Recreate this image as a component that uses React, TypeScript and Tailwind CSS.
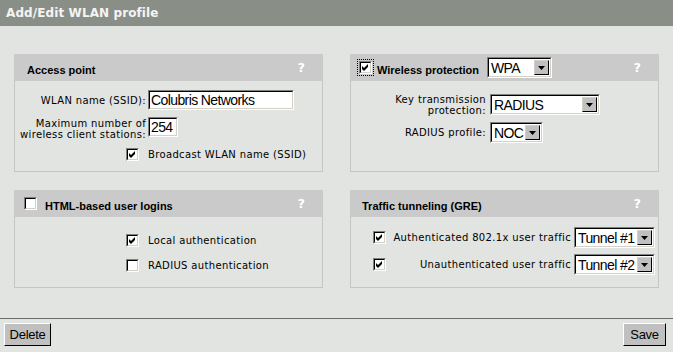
import React from "react";

function Check() {
  return (
    <svg width="7" height="7" viewBox="0 0 7 7" className="block">
      <path d="M0 2 L2 4 L6 0 L6 3 L2 7 L0 5 Z" fill="#000" />
    </svg>
  );
}

function Checkbox({ checked }: { checked?: boolean }) {
  return (
    <span className="inline-block w-[13px] h-[13px] border border-t-[#808080] border-l-[#808080] border-b-white border-r-white shrink-0">
      <span className="flex items-center justify-center w-full h-full border border-t-black border-l-black border-b-[#d4d0c8] border-r-[#d4d0c8] bg-white">
        {checked && <Check />}
      </span>
    </span>
  );
}

function Arrow() {
  return (
    <span className="flex items-center justify-center w-[15px] h-full bg-[#c0c0c0] border border-t-[#d4d0c8] border-l-[#d4d0c8] border-b-black border-r-black shrink-0">
      <svg width="7" height="4" viewBox="0 0 7 4" className="block">
        <path d="M0 0 L7 0 L3.5 4 Z" fill="#000" />
      </svg>
    </span>
  );
}

function Select({ value, w }: { value: string; w: string }) {
  return (
    <div
      className={`${w} h-[21px] flex bg-white border border-t-[#808080] border-l-[#808080] border-b-white border-r-white`}
    >
      <div className="flex flex-1 min-w-0 h-full border border-t-black border-l-black border-b-[#d4d0c8] border-r-[#d4d0c8] p-[1px]">
        <span className="flex-1 min-w-0 pl-[1px] text-[14px] leading-[16px] tracking-[-0.6px] font-['Liberation_Sans',sans-serif] text-black overflow-hidden whitespace-nowrap">
          {value}
        </span>
        <Arrow />
      </div>
    </div>
  );
}

function Input({ value, w }: { value: string; w: string }) {
  return (
    <div
      className={`${w} h-[20px] bg-white border border-t-[#808080] border-l-[#808080] border-b-white border-r-white`}
    >
      <div className="h-full border border-t-black border-l-black border-b-[#d4d0c8] border-r-[#d4d0c8] pl-[1px] text-[14px] leading-[16px] tracking-[-0.6px] font-['Liberation_Sans',sans-serif] text-black whitespace-nowrap overflow-hidden">
        {value}
      </div>
    </div>
  );
}

function Help() {
  return <span className="ml-auto mr-[18px] text-white font-bold text-[13px] font-['DejaVu_Sans',sans-serif]">?</span>;
}

function HeaderText({ children }: { children: React.ReactNode }) {
  return (
    <span className="text-[11px] font-bold text-black font-['Liberation_Sans',sans-serif] whitespace-nowrap">
      {children}
    </span>
  );
}

function Panel({ header, children }: { header: React.ReactNode; children: React.ReactNode }) {
  return (
    <div className="flex flex-col h-full">
      <div className="h-[27px] bg-[#c9cac9] flex items-center shrink-0">{header}</div>
      <div className="flex-1 border border-t-0 border-[#c3c6c3]">{children}</div>
    </div>
  );
}

const label = "text-[10px] leading-[11px] tracking-[0.35px] text-black font-['DejaVu_Sans',sans-serif] whitespace-nowrap";

export default function App() {
  return (
    <div className="w-[673px] h-[352px] bg-[#e1e4e1] flex flex-col overflow-hidden">
      <div className="h-[26px] bg-[#898e87] flex items-center px-[6px] shrink-0">
        <span className="text-[12px] font-bold text-[#f4f4f4] tracking-[0.1px] font-['DejaVu_Sans',sans-serif]">
          Add/Edit WLAN profile
        </span>
      </div>

      <div className="flex-1 px-[14px] pt-[28px]">
        <div className="grid grid-cols-[309px_309px] grid-rows-[118px_98px] gap-x-[27px] gap-y-[18px]">
          <Panel
            header={
              <>
                <span className="ml-[13px]">
                  <HeaderText>Access point</HeaderText>
                </span>
                <Help />
              </>
            }
          >
            <div className="grid grid-cols-[131px_1fr] gap-x-[2px] pt-[9px]">
              <div className={`${label} flex items-center justify-end h-[20px]`}>WLAN name (SSID):</div>
              <Input value="Colubris Networks" w="w-[146px]" />
              <div className={`${label} text-right mt-[7px] leading-[10px] pt-[1px]`}>
                Maximum number of
                <br />
                wireless client stations:
              </div>
              <div className="mt-[7px]">
                <Input value="254" w="w-[30px]" />
              </div>
              <div className="flex justify-end pr-[7px] mt-[8px]">
                <Checkbox checked />
              </div>
              <div className={`${label} mt-[8px] flex items-center h-[13px]`}>Broadcast WLAN name (SSID)</div>
            </div>
          </Panel>

          <Panel
            header={
              <>
                <span className="ml-[7px] p-[1px] border border-dotted border-black flex">
                  <Checkbox checked />
                </span>
                <span className="ml-[3px]">
                  <HeaderText>Wireless protection</HeaderText>
                </span>
                <span className="ml-[8px]">
                  <Select value="WPA" w="w-[65px]" />
                </span>
                <Help />
              </>
            }
          >
            <div className="grid grid-cols-[135px_1fr] gap-x-[4px] pt-[13px] gap-y-[7px]">
              <div className={`${label} text-right flex flex-col justify-center h-[21px] leading-[10px]`}>
                <span>Key transmission</span>
                <span>protection:</span>
              </div>
              <Select value="RADIUS" w="w-[110px]" />
              <div className={`${label} flex items-center justify-end h-[21px]`}>RADIUS profile:</div>
              <Select value="NOC" w="w-[53px]" />
            </div>
          </Panel>

          <Panel
            header={
              <>
                <span className="ml-[10px] flex">
                  <Checkbox />
                </span>
                <span className="ml-[8px]">
                  <HeaderText>HTML-based user logins</HeaderText>
                </span>
                <Help />
              </>
            }
          >
            <div className="flex flex-col pl-[111px] pt-[17px] gap-y-[12px]">
              <div className="flex items-center gap-x-[9px]">
                <Checkbox checked />
                <span className={label}>Local authentication</span>
              </div>
              <div className="flex items-center gap-x-[9px]">
                <Checkbox />
                <span className={label}>RADIUS authentication</span>
              </div>
            </div>
          </Panel>

          <Panel
            header={
              <>
                <span className="ml-[12px]">
                  <HeaderText>Traffic tunneling (GRE)</HeaderText>
                </span>
                <Help />
              </>
            }
          >
            <div className="grid grid-cols-[13px_1fr_81px] items-center gap-x-[3px] gap-y-[6px] pl-[22px] pr-[3px] pt-[10px]">
              <Checkbox checked />
              <span className={`${label} text-right`}>Authenticated 802.1x user traffic</span>
              <Select value="Tunnel #1" w="w-[81px]" />
              <Checkbox checked />
              <span className={`${label} text-right`}>Unauthenticated user traffic</span>
              <Select value="Tunnel #2" w="w-[81px]" />
            </div>
          </Panel>
        </div>
      </div>

      <div className="h-[34px] border-t border-[#6b6e6b] flex items-start justify-between pl-[4px] pr-[7px] pt-[4px] shrink-0">
        <button className="h-[23px] w-[47px] bg-[#c0c0c0] border border-t-white border-l-white border-b-black border-r-black text-[13px] tracking-[-0.3px] text-black font-['Liberation_Sans',sans-serif]">
          Delete
        </button>
        <button className="h-[23px] w-[43px] bg-[#c0c0c0] border border-t-white border-l-white border-b-black border-r-black text-[13px] tracking-[-0.3px] text-black font-['Liberation_Sans',sans-serif]">
          Save
        </button>
      </div>
    </div>
  );
}
